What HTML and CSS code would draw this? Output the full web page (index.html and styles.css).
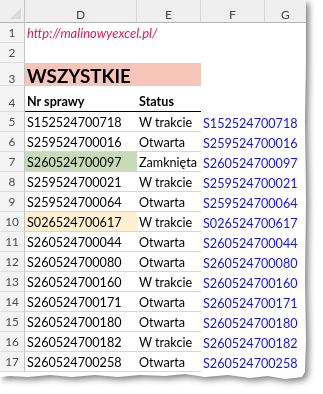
FILE: index.html
```html
<!DOCTYPE html>
<html>
<head>
<meta charset="utf-8">
<link rel="stylesheet" href="styles.css">
</head>
<body>
<div class="frame">
<div class="sheet">
<div class="grid">
  <div class="c h corner"><span class="tri"></span></div>
  <div class="c h">D</div>
  <div class="c h">E</div>
  <div class="c h">F</div>
  <div class="c h last">G</div>

  <div class="c rh">1</div>
  <div class="c url">http://malinowyexcel.pl/</div>
  <div class="c"></div><div class="c"></div><div class="c"></div>

  <div class="c rh">2</div>
  <div class="c"></div><div class="c"></div><div class="c"></div><div class="c"></div>

  <div class="c rh r3">3</div>
  <div class="c pink title">WSZYSTKIE</div>
  <div class="c pink"></div><div class="c"></div><div class="c"></div>

  <div class="c rh r4">4</div>
  <div class="c hb">Nr sprawy</div>
  <div class="c hb">Status</div>
  <div class="c"></div><div class="c"></div>

  <div class="c rh">5</div><div class="c b">S152524700718</div><div class="c b">W trakcie</div><div class="c blue">S152524700718</div><div class="c"></div>
  <div class="c rh">6</div><div class="c b">S259524700016</div><div class="c b">Otwarta</div><div class="c blue">S259524700016</div><div class="c"></div>
  <div class="c rh">7</div><div class="c b green">S260524700097</div><div class="c b">Zamknięta</div><div class="c blue">S260524700097</div><div class="c"></div>
  <div class="c rh">8</div><div class="c b">S259524700021</div><div class="c b">W trakcie</div><div class="c blue">S259524700021</div><div class="c"></div>
  <div class="c rh">9</div><div class="c b">S259524700064</div><div class="c b">Otwarta</div><div class="c blue">S259524700064</div><div class="c"></div>
  <div class="c rh">10</div><div class="c b yellow">S026524700617</div><div class="c b">W trakcie</div><div class="c blue">S026524700617</div><div class="c"></div>
  <div class="c rh">11</div><div class="c b">S260524700044</div><div class="c b">Otwarta</div><div class="c blue">S260524700044</div><div class="c"></div>
  <div class="c rh">12</div><div class="c b">S260524700080</div><div class="c b">Otwarta</div><div class="c blue">S260524700080</div><div class="c"></div>
  <div class="c rh">13</div><div class="c b">S260524700160</div><div class="c b">W trakcie</div><div class="c blue">S260524700160</div><div class="c"></div>
  <div class="c rh">14</div><div class="c b">S260524700171</div><div class="c b">Otwarta</div><div class="c blue">S260524700171</div><div class="c"></div>
  <div class="c rh">15</div><div class="c b">S260524700180</div><div class="c b">Otwarta</div><div class="c blue">S260524700180</div><div class="c"></div>
  <div class="c rh">16</div><div class="c b">S260524700182</div><div class="c b">W trakcie</div><div class="c blue">S260524700182</div><div class="c"></div>
  <div class="c rh">17</div><div class="c b">S260524700258</div><div class="c b">Otwarta</div><div class="c blue">S260524700258</div><div class="c"></div>
</div>
</div>
</div>
</body>
</html>
```
FILE: styles.css
```css
* { box-sizing: border-box; }
html, body { margin: 0; padding: 0; background: #fff; }
.frame {
  width: 323px;
  height: 394px;
  filter: drop-shadow(3px 3px 3px rgba(0,0,0,0.5));
}
.sheet {
  width: 306px;
  background: #fff;
  padding-bottom: 8px;
  clip-path: polygon(0 0, 306px 0, 306px 60px, 305px 120px, 306px 200px, 305px 280px, 306px 340px, 305px 372px, 302px 377px, 285px 379px, 268px 376px, 250px 378px, 228px 375px, 205px 377px, 185px 374px, 165px 376px, 140px 375px, 118px 377px, 95px 375px, 72px 377px, 50px 375px, 28px 377px, 10px 376px, 0 377px);
}
.grid {
  display: grid;
  grid-template-columns: 25px 112px 64px 64px 41px;
  grid-template-rows: 23px 20px 20px 23px 26px repeat(13, 20px);
}
.c {
  display: flex;
  align-items: flex-end;
  min-width: 0;
  padding: 0 2px 1.5px;
  white-space: nowrap;
  overflow: hidden;
  font-family: Lato, "Open Sans", sans-serif;
  font-size: 12.6px;
  line-height: 15px;
  color: #000;
}
.h {
  background: #efefef;
  border-bottom: 1px solid #b4b4b4;
  border-right: 1px solid #d6d6d6;
  justify-content: center;
  font-size: 12px;
  line-height: 13px;
  color: #444;
  padding-bottom: 1px;
}
.h.last { border-right: none; }
.corner {
  justify-content: flex-end;
  padding: 0 3px 3px 0;
  border-right: 1px solid #c3c3c3;
}
.tri {
  width: 0;
  height: 0;
  border-left: 11px solid transparent;
  border-bottom: 11px solid #d9d9d9;
}
.rh {
  background: #f3f3f3;
  border-right: 1px solid #c3c3c3;
  border-bottom: 1px solid #dedede;
  justify-content: center;
  font-size: 11.8px;
  line-height: 13px;
  color: #444c55;
  padding: 0 0 3px;
}
.rh.r3 { padding-bottom: 0; }
.rh.r4 { padding-bottom: 2px; }
.url {
  color: #e6195a;
  font-style: italic;
  overflow: visible;
  padding-bottom: 2.5px;
  font-size: 13px;
}
.pink { background: #f6c4b9; }
.title {
  font-weight: bold;
  font-size: 18.8px;
  line-height: 18px;
  padding-bottom: 1px;
}
.hb {
  font-weight: bold;
  border-bottom: 1px solid #000;
  padding-bottom: 2px;
}
.b { border-bottom: 1px solid #dad5cd; }
.green { background: #c9dab9; }
.yellow { background: #fef0d0; }
.blue {
  color: #1414f0;
  overflow: visible;
}
```
